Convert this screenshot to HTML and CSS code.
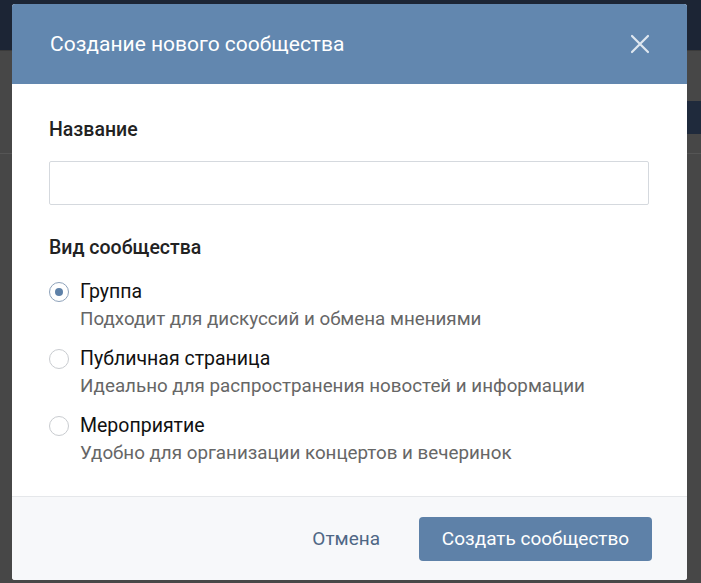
FILE: index.html
```html
<!DOCTYPE html>
<html lang="ru">
<head>
  <meta charset="UTF-8" />
  <meta name="viewport" content="width=device-width, initial-scale=1.0"/>
  <title>Создание нового сообщества</title>
  <link rel="stylesheet" href="styles.css">
</head>
<body>

  <div class="page">
    <div class="topbar"></div>
    <div class="page-body">
      <div class="side-button"></div>
    </div>
  </div>

  <div class="modal">
    <div class="modal-header">
      <h2>Создание нового сообщества</h2>
      <button class="close" aria-label="Закрыть">
        <svg width="20" height="20" viewBox="0 0 20 20">
          <path d="M2 2 L18 18 M18 2 L2 18" stroke="#dfe7f0" stroke-width="2.2" stroke-linecap="round"/>
        </svg>
      </button>
    </div>

    <div class="modal-body">
      <div class="field-label">Название</div>
      <input class="text-input" type="text">

      <div class="field-label type-label">Вид сообщества</div>
      <div class="options">
        <label class="option">
          <span class="radio checked"></span>
          <span class="option-text">
            <span class="option-title">Группа</span>
            <span class="option-desc">Подходит для дискуссий и обмена мнениями</span>
          </span>
        </label>
        <label class="option">
          <span class="radio"></span>
          <span class="option-text">
            <span class="option-title">Публичная страница</span>
            <span class="option-desc">Идеально для распространения новостей и информации</span>
          </span>
        </label>
        <label class="option">
          <span class="radio"></span>
          <span class="option-text">
            <span class="option-title">Мероприятие</span>
            <span class="option-desc">Удобно для организации концертов и вечеринок</span>
          </span>
        </label>
      </div>
    </div>

    <div class="modal-footer">
      <button class="btn-cancel">Отмена</button>
      <button class="btn-primary">Создать сообщество</button>
    </div>
  </div>

</body>
</html>
```

FILE: styles.css
```css
:root {
  --header-blue: #6287af;
  --button-blue: #5e81a8;
  --backdrop: #474747;
  --navy: #1c2535;
}

body {
  font-family: Roboto, 'Noto Sans', sans-serif;
  background-color: var(--backdrop);
  margin: 0;
  padding: 0;
  height: 583px;
  overflow: hidden;
}

.topbar {
  height: 50px;
  background-color: var(--navy);
  border-bottom: 1px solid #3a3a3a;
}

.page-body {
  display: flex;
  justify-content: flex-end;
  padding-top: 50px;
  border-bottom: 1px solid #555;
  height: 52px;
}

.side-button {
  background-color: #1f2a3c;
  height: 33px;
  width: 60px;
}

.modal {
  position: absolute;
  left: 12px;
  top: 4px;
  width: 675px;
  height: 576px;
  background-color: #fff;
  border-radius: 3px;
  overflow: hidden;
  display: flex;
  flex-direction: column;
}

.modal-header {
  height: 80px;
  background-color: var(--header-blue);
  display: flex;
  align-items: center;
  justify-content: space-between;
  padding: 0 37px 0 38px;
  flex-shrink: 0;
}

.modal-header h2 {
  margin: 0;
  color: #fff;
  font-size: 21px;
  font-weight: 400;
}

.close {
  background: none;
  border: none;
  padding: 0;
  width: 20px;
  height: 20px;
  display: flex;
}

.modal-body {
  flex: 1;
  padding: 36px 38px 0 37px;
}

.field-label {
  font-size: 19.5px;
  line-height: 20px;
  font-weight: 500;
  color: #222;
}

.text-input {
  display: block;
  box-sizing: border-box;
  width: 600px;
  height: 44px;
  margin-top: 21px;
  border: 1px solid #d5d9de;
  border-radius: 2px;
  font-size: 16px;
}

.type-label {
  margin-top: 33px;
}

.options {
  display: flex;
  flex-direction: column;
  gap: 20px;
  margin-top: 24px;
}

.option {
  display: flex;
  gap: 11px;
}

.radio {
  box-sizing: border-box;
  width: 20px;
  height: 20px;
  border: 1.5px solid #c9ccd0;
  border-radius: 50%;
  flex-shrink: 0;
  display: flex;
  align-items: center;
  justify-content: center;
}

.radio.checked {
  border-color: #8ea2ba;
}

.radio.checked::after {
  content: "";
  width: 8px;
  height: 8px;
  border-radius: 50%;
  background-color: var(--button-blue);
}

.option-text {
  display: flex;
  flex-direction: column;
  gap: 7px;
}

.option-title {
  font-size: 19.5px;
  line-height: 20px;
  color: #111;
}

.option-desc {
  font-size: 18.8px;
  line-height: 20px;
  color: #666;
}

.modal-footer {
  height: 84px;
  box-sizing: border-box;
  border-top: 1px solid #e5e7ea;
  background-color: #f7f8fa;
  display: flex;
  align-items: center;
  justify-content: flex-end;
  padding: 0 35px 0 0;
  gap: 19px;
}

.btn-cancel {
  background: none;
  border: none;
  font-family: inherit;
  font-size: 19px;
  color: #4f6785;
  padding: 0 20px;
  height: 44px;
}

.btn-primary {
  background-color: var(--button-blue);
  color: #fff;
  border: none;
  border-radius: 4px;
  font-family: inherit;
  font-size: 19px;
  width: 233px;
  height: 44px;
}
```
